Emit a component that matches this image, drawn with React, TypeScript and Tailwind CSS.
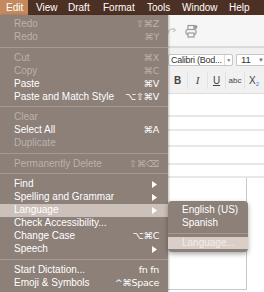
import React from "react";

type Row =
  | { label: string; keys?: string; off?: boolean; arrow?: boolean; active?: boolean }
  | "sep";

const rows: Row[] = [
  { label: "Redo", keys: "⇧⌘Z", off: true },
  { label: "Redo", keys: "⌘Y", off: true },
  "sep",
  { label: "Cut", keys: "⌘X", off: true },
  { label: "Copy", keys: "⌘C", off: true },
  { label: "Paste", keys: "⌘V" },
  { label: "Paste and Match Style", keys: "⌥⇧⌘V" },
  "sep",
  { label: "Clear", off: true },
  { label: "Select All", keys: "⌘A" },
  { label: "Duplicate", off: true },
  "sep",
  { label: "Permanently Delete", keys: "⇧⌘⌫", off: true },
  "sep",
  { label: "Find", arrow: true },
  { label: "Spelling and Grammar", arrow: true },
  { label: "Language", arrow: true, active: true },
  { label: "Check Accessibility..." },
  { label: "Change Case", keys: "⌥⌘C" },
  { label: "Speech", arrow: true },
  "sep",
  { label: "Start Dictation...", keys: "fn fn" },
  { label: "Emoji & Symbols", keys: "^⌘Space" },
];

function Arrow() {
  return (
    <svg width="5" height="7" viewBox="0 0 5 7" className="mr-[2px]">
      <polygon points="0,0 5,3.5 0,7" fill="#ffffff" />
    </svg>
  );
}

function MenuRow({ row }: { row: Row }) {
  if (row === "sep") {
    return (
      <div className="h-[7.5px] flex items-center">
        <div className="h-px w-full bg-[#a59a93]" />
      </div>
    );
  }
  const color = row.off ? "text-[#bbb2ac]" : "text-white";
  return (
    <div
      className={`h-[13px] flex items-center justify-between pl-[14px] pr-[9px] ${color} ${
        row.active ? "bg-[#ccc1ba]" : ""
      }`}
    >
      <span>{row.label}</span>
      {row.arrow ? (
        <Arrow />
      ) : row.keys ? (
        <span className="font-['DejaVu_Sans',sans-serif] text-[9.5px] tracking-[-0.3px]">{row.keys}</span>
      ) : null}
    </div>
  );
}

const bar = [
  { t: "Edit", w: "w-[28px] pl-[6px] bg-[#c4895d]" },
  { t: "View", w: "w-[32px] pl-[8px]" },
  { t: "Draft", w: "w-[35px] pl-[8px]" },
  { t: "Format", w: "w-[44px] pl-[8px]" },
  { t: "Tools", w: "w-[35px] pl-[8px]" },
  { t: "Window", w: "w-[47px] pl-[8px]" },
  { t: "Help", w: "w-[35px] pl-[8px]" },
];

export default function App() {
  return (
    <div className="relative w-[264px] h-[292px] overflow-hidden flex flex-col bg-white font-['Liberation_Sans',Arial,sans-serif] text-[10px] leading-none">
      <div className="h-[15px] flex bg-[#4d3024] text-white shrink-0">
        {bar.map((b) => (
          <div key={b.t} className={`h-full flex items-center ${b.w}`}>
            {b.t}
          </div>
        ))}
      </div>

      <div className="flex flex-1 min-h-0">
        <div className="w-[168px] shrink-0 bg-[#8c8079] pt-[2.5px] shadow-[1px_0_2px_rgba(0,0,0,0.25)] z-10">
          {rows.map((r, i) => (
            <MenuRow key={i} row={r} />
          ))}
        </div>

        <div className="flex-1 min-w-0 flex flex-col">
          <div className="h-[33px] bg-[#f6f6f6] flex items-center gap-[8px] border-b-2 border-[#dadada]">
            <svg width="9" height="10" viewBox="0 0 9 10" fill="none" stroke="#c9c9c9" strokeWidth="1.3">
              <path d="M0 8 C0 4 3 2 7 4" />
              <path d="M5 2 L7.5 4 L5 6" />
            </svg>
            <svg width="13" height="14" viewBox="0 0 13 14" fill="none" stroke="#9a9a9a" strokeWidth="1.2">
              <rect x="3" y="1.5" width="6" height="4" />
              <rect x="1" y="5.5" width="10" height="5" rx="1.5" />
              <rect x="3" y="9" width="6" height="4" fill="#f6f6f6" />
              <circle cx="10.5" cy="3" r="2" fill="#9a9a9a" stroke="none" />
            </svg>
          </div>

          <div className="h-[46px] bg-[#f1f1f1] flex flex-col pt-[6px] gap-[6px] border-b border-[#dedede]">
            <div className="flex gap-[3px] h-[12px]">
              <div className="w-[65px] shrink-0 bg-white border border-[#c6c6c6] rounded-[2px] flex items-center pl-[2px] text-[#333] text-[9px] tracking-[-0.25px]">
                <span className="flex-1 whitespace-nowrap">Calibri (Bod...</span>
                <span className="w-[8px] shrink-0 h-full border-l border-[#dcdcdc] flex items-center justify-center text-[5px] text-[#777]">▼</span>
              </div>
              <div className="flex-1 bg-white border border-r-0 border-[#c6c6c6] rounded-l-[2px] flex items-center pl-[4px] text-[#333] text-[9.5px]">
                <span className="flex-1">11</span>
                <span className="w-[6px] text-[6px] text-[#777]">▼</span>
              </div>
            </div>
            <div className="flex h-[17px] items-center text-[#444]">
              <div className="w-[19px] h-full flex items-center justify-center font-bold text-[10px]">B</div>
              <div className="w-[20px] h-full flex items-center justify-center border-l border-[#e2e2e2] italic font-['Liberation_Serif',serif] text-[11px]">I</div>
              <div className="w-[18px] h-full flex items-center justify-center border-l border-[#e2e2e2] underline text-[10px]">U</div>
              <div className="w-[19px] h-full flex items-center justify-center border-l border-[#e2e2e2] text-[8px]">abc</div>
              <div className="flex-1 h-full flex items-center pl-[4px] border-l border-[#e2e2e2] text-[10px]">
                X<span className="text-[6px] text-[#3b7ddd] mt-[6px]">2</span>
              </div>
            </div>
          </div>

          <div className="flex-1 bg-white flex flex-col">
            <div className="h-[23px] border-b-2 border-[#e8e8e8]" />
            <div className="h-[14px] border-b-2 border-[#e8e8e8]" />
            <div className="h-[16px] border-b-2 border-[#e8e8e8]" />
            <div className="h-[18px] border-b-2 border-[#e8e8e8]" />
            <div className="h-[13px] border-b-2 border-[#e8e8e8]" />
            <div className="flex-1 flex">
              <div className="w-[79px] border-r border-b border-[#c9c9c9] mb-[2px]" />
            </div>
          </div>
        </div>
      </div>

      <div className="absolute left-[168px] top-[201px] w-[80px] h-[51px] rounded-[4px] bg-[#8c8079] shadow-[0_2px_5px_rgba(0,0,0,0.35)] pt-[2.5px] z-20 text-white">
        <div className="h-[13px] flex items-center pl-[14px]">English (US)</div>
        <div className="h-[13px] flex items-center pl-[14px]">Spanish</div>
        <div className="h-[7px] flex items-center">
          <div className="h-px w-full bg-[#a59a93]" />
        </div>
        <div className="h-[12px] flex items-center pl-[14px] bg-[#d9cfc8] text-[#f3eeea]">Language...</div>
      </div>
    </div>
  );
}
